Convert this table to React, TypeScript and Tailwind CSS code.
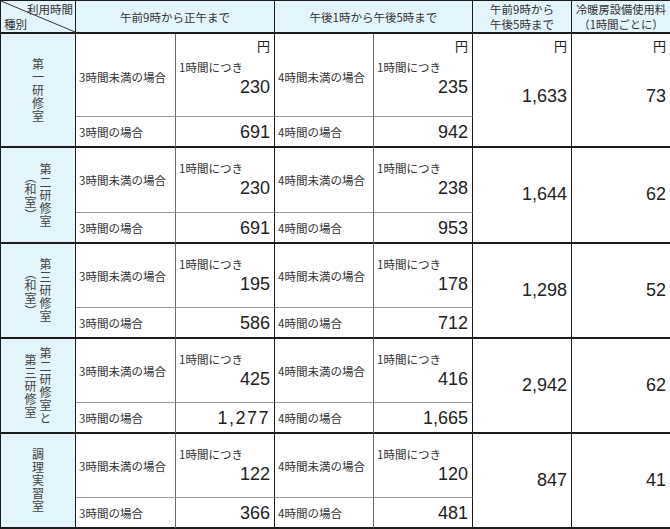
import React from 'react';

type Room = {
  name: string[];
  yen?: boolean;
  amHourly: string;
  amFull: string;
  pmHourly: string;
  pmFull: string;
  day: string;
  ac: string;
  amFullWide?: boolean;
};

const rooms: Room[] = [
  { name: ['第一研修室'], yen: true, amHourly: '230', amFull: '691', pmHourly: '235', pmFull: '942', day: '1,633', ac: '73' },
  { name: ['第二研修室', '（和室）'], amHourly: '230', amFull: '691', pmHourly: '238', pmFull: '953', day: '1,644', ac: '62' },
  { name: ['第三研修室', '（和室）'], amHourly: '195', amFull: '586', pmHourly: '178', pmFull: '712', day: '1,298', ac: '52' },
  { name: ['第二研修室と', '第三研修室'], amHourly: '425', amFull: '1,277', pmHourly: '416', pmFull: '1,665', day: '2,942', ac: '62', amFullWide: true },
  { name: ['調理実習室'], amHourly: '122', amFull: '366', pmHourly: '120', pmFull: '481', day: '847', ac: '41' },
];

const dark = 'border-[#1c1c1c]';
const blue = 'bg-[#e3f4fb]';
const jp = "font-['Noto_Sans_CJK_JP',sans-serif]";
const label = `${jp} text-[11.5px] leading-[14px] text-[#333]`;
const num = "font-['Liberation_Sans',sans-serif] text-[18px] leading-[18px] text-[#222]";

// full-width brackets keep their full em box
const withParens = (text: string) =>
  text.split(/([（）])/).map((part, i) =>
    part === '（' ? (
      <span key={i} className="inline-block text-end [inline-size:1em]">（</span>
    ) : part === '）' ? (
      <span key={i} className="inline-block text-start [inline-size:1em]">）</span>
    ) : (
      part
    )
  );

const Yen = () => <div className={`pr-1 pt-[5px] text-right text-[13px] leading-[14px] text-[#222] ${jp}`}>円</div>;

const HourlyCell = ({ value, yen }: { value: string; yen?: boolean }) => (
  <div className="flex flex-col border-b border-r border-b-[#9a9a9a] border-r-[#1c1c1c]">
    {yen ? <Yen /> : null}
    <div className={`flex flex-1 flex-col justify-center ${yen ? 'pb-[14px]' : 'pb-[2px]'}`}>
      <div className={`pl-[3px] ${label}`}>1時間につき</div>
      <div className={`mt-[4px] pr-1 text-right ${num}`}>{value}</div>
    </div>
  </div>
);

export default function App() {
  return (
    <div className="min-h-screen bg-white">
      <div
        className={`grid w-[670px] grid-cols-[75px_100px_99px_99px_99px_99px_99px] grid-rows-[33px_83px_31px_65px_31px_64px_31px_64px_31px_64px_31px] border-l border-t ${dark}`}
      >
        {/* header */}
        <div className={`relative border-b-2 border-r ${dark} ${blue}`}>
          <svg className="absolute inset-0 h-full w-full" preserveAspectRatio="none" viewBox="0 0 100 100">
            <line x1="0" y1="0" x2="100" y2="100" stroke="#333" strokeWidth="1" vectorEffect="non-scaling-stroke" />
          </svg>
          <div className={`absolute right-[2px] top-[1px] ${label}`}>利用時間</div>
          <div className={`absolute bottom-[1px] left-[3px] ${label}`}>種別</div>
        </div>
        <div className={`col-span-2 flex items-center justify-center border-b-2 border-r ${dark} ${blue} ${label}`}>
          午前9時から正午まで
        </div>
        <div className={`col-span-2 flex items-center justify-center border-b-2 border-r ${dark} ${blue} ${label}`}>
          午後1時から午後5時まで
        </div>
        <div className={`flex flex-col items-center justify-center border-b-2 border-r ${dark} ${blue} ${jp} text-[11.5px] leading-[15px] text-[#333]`}>
          <span>午前9時から</span>
          <span>午後5時まで</span>
        </div>
        <div className={`flex flex-col items-center justify-center border-b-2 border-r ${dark} ${blue} ${jp} text-[11.25px] leading-[15px] text-[#333]`}>
          <span>冷暖房設備使用料</span>
          <span className="whitespace-nowrap">{withParens('（1時間ごとに）')}</span>
        </div>

        {rooms.map((room) => (
          <React.Fragment key={room.name.join('')}>
            <div className={`row-span-2 flex flex-row-reverse items-center justify-center gap-[2px] border-b-2 border-r ${dark} ${blue}`}>
              {room.name.map((col, i) => (
                <span
                  key={col}
                  className={`${jp} text-[12px] leading-[13px] tracking-[1px] text-[#444] [writing-mode:vertical-rl] ${i === 1 ? 'mt-[2px]' : ''}`}
                >
                  {withParens(col)}
                </span>
              ))}
            </div>

            <div className={`flex items-center border-b border-r border-b-[#9a9a9a] border-r-[#6a6a6a] pl-[3px] ${label} ${room.yen ? 'pt-[4px]' : ''}`}>
              3時間未満の場合
            </div>
            <HourlyCell value={room.amHourly} yen={room.yen} />
            <div className={`flex items-center border-b border-r border-b-[#9a9a9a] border-r-[#6a6a6a] pl-[3px] ${label} ${room.yen ? 'pt-[4px]' : ''}`}>
              4時間未満の場合
            </div>
            <HourlyCell value={room.pmHourly} yen={room.yen} />

            <div className={`row-span-2 flex flex-col border-b-2 border-r ${dark}`}>
              {room.yen ? <Yen /> : null}
              <div className={`flex flex-1 items-center justify-end pr-1 ${num} ${room.yen ? 'pb-[8px]' : 'pb-[2px]'}`}>
                {room.day}
              </div>
            </div>
            <div className={`row-span-2 flex flex-col border-b-2 border-r ${dark}`}>
              {room.yen ? <Yen /> : null}
              <div className={`flex flex-1 items-center justify-end pr-1 ${num} ${room.yen ? 'pb-[8px]' : 'pb-[2px]'}`}>
                {room.ac}
              </div>
            </div>

            <div className={`flex items-center border-b-2 border-r border-b-[#1c1c1c] border-r-[#6a6a6a] pl-[3px] ${label}`}>
              3時間の場合
            </div>
            <div className={`flex items-center justify-end border-b-2 border-r ${dark} pr-1 ${num} ${room.amFullWide ? 'tracking-[1.5px]' : ''}`}>
              {room.amFull}
            </div>
            <div className={`flex items-center border-b-2 border-r border-b-[#1c1c1c] border-r-[#6a6a6a] pl-[3px] ${label}`}>
              4時間の場合
            </div>
            <div className={`flex items-center justify-end border-b-2 border-r ${dark} pr-1 ${num}`}>
              {room.pmFull}
            </div>
          </React.Fragment>
        ))}
      </div>
    </div>
  );
}
